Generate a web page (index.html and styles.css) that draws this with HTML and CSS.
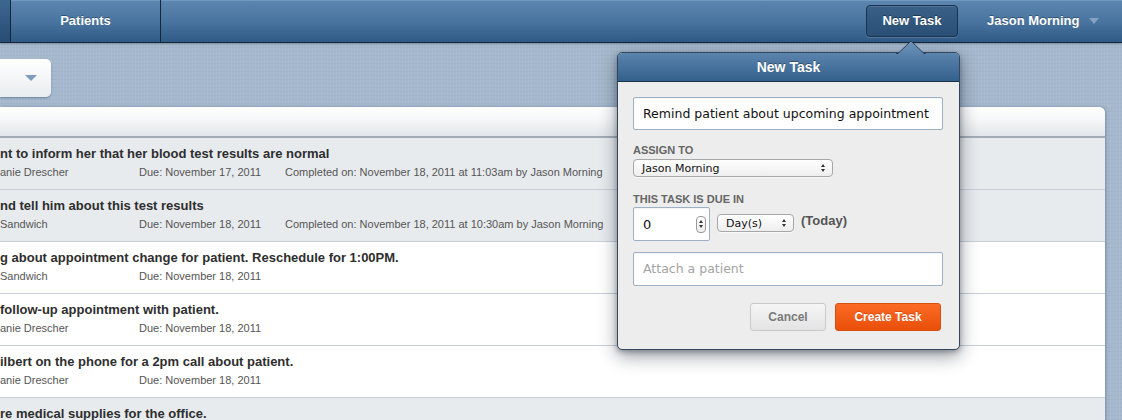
FILE: index.html
```html
<!DOCTYPE html>
<html>
<head>
<meta charset="utf-8">
<link rel="stylesheet" href="styles.css">
</head>
<body>
<header class="nav">
  <div class="nav-stub"></div>
  <div class="nav-tab">Patients</div>
  <div class="nav-spacer"></div>
  <button class="nav-newtask">New Task</button>
  <div class="nav-user">Jason Morning <span class="caret"></span></div>
</header>

<main class="main">
  <div class="filter-btn"><span class="caret caret-blue"></span></div>
  <section class="panel">
    <div class="panel-head"></div>
    <div class="row done">
      <div class="title">nt to inform her that her blood test results are normal</div>
      <div class="meta"><span class="who">anie Drescher</span><span class="due">Due: November 17, 2011</span><span class="comp">Completed on: November 18, 2011 at 11:03am by Jason Morning</span></div>
    </div>
    <div class="row done">
      <div class="title">nd tell him about this test results</div>
      <div class="meta"><span class="who">Sandwich</span><span class="due">Due: November 18, 2011</span><span class="comp">Completed on: November 18, 2011 at 10:30am by Jason Morning</span></div>
    </div>
    <div class="row">
      <div class="title">g about appointment change for patient. Reschedule for 1:00PM.</div>
      <div class="meta"><span class="who">Sandwich</span><span class="due">Due: November 18, 2011</span></div>
    </div>
    <div class="row">
      <div class="title">follow-up appointment with patient.</div>
      <div class="meta"><span class="who">anie Drescher</span><span class="due">Due: November 18, 2011</span></div>
    </div>
    <div class="row">
      <div class="title">ilbert on the phone for a 2pm call about patient.</div>
      <div class="meta"><span class="who">anie Drescher</span><span class="due">Due: November 18, 2011</span></div>
    </div>
    <div class="row done">
      <div class="title">re medical supplies for the office.</div>
    </div>
  </section>
</main>

<div class="popover">
  <svg class="pop-arrow" width="30" height="14" viewBox="0 0 30 14">
    <defs>
      <linearGradient id="ag" x1="0" y1="0" x2="0" y2="1">
        <stop offset="0" stop-color="#6b93b9"/>
        <stop offset="1" stop-color="#5b84ad"/>
      </linearGradient>
    </defs>
    <path d="M0 13.5 L2 13.5 L15 1 L28 13.5 L30 13.5" fill="url(#ag)" stroke="#2a3f55" stroke-width="1"/>
    <path d="M2.5 14 L15 2 L27.5 14 Z" fill="url(#ag)"/>
  </svg>
  <div class="pop-head">New Task</div>
  <div class="pop-body">
    <div class="field big">Remind patient about upcoming appointment</div>
    <div class="label">ASSIGN TO</div>
    <div class="select wide"><span>Jason Morning</span><span class="updown"><i class="up"></i><i class="dn"></i></span></div>
    <div class="label second">THIS TASK IS DUE IN</div>
    <div class="due-row">
      <div class="field num"><span>0</span><span class="spin"><i class="up"></i><i class="dn"></i></span></div>
      <div class="select small"><span>Day(s)</span><span class="updown"><i class="up"></i><i class="dn"></i></span></div>
      <div class="today">(Today)</div>
    </div>
    <div class="field big placeholder">Attach a patient</div>
    <div class="actions">
      <button class="btn cancel">Cancel</button>
      <button class="btn create">Create Task</button>
    </div>
  </div>
</div>
</body>
</html>
```
FILE: styles.css
```css
* { box-sizing: border-box; }
html, body { margin: 0; padding: 0; }
body {
  width: 1122px;
  height: 420px;
  overflow: hidden;
  position: relative;
  font-family: "Liberation Sans", Arial, sans-serif;
  background-color: #a5b8cd;
  background-image:
    repeating-linear-gradient(90deg, rgba(255,255,255,0.05) 0 1px, rgba(0,0,0,0) 1px 3px),
    repeating-linear-gradient(0deg, rgba(60,80,110,0.05) 0 1px, rgba(0,0,0,0) 1px 4px);
}

/* NAV */
.nav {
  display: flex;
  align-items: stretch;
  height: 43px;
  background: linear-gradient(#5c86af 0%, #4a75a0 50%, #2f5a86 100%);
  border-bottom: 1px solid #14283d;
  box-shadow: inset 0 1px 0 #7099c0, 0 1px 2px rgba(0,0,0,0.25);
}
.nav-stub {
  width: 11px;
  background: linear-gradient(#3e6790, #274c73);
  border-right: 1px solid #13263a;
}
.nav-tab {
  width: 150px;
  border-right: 1px solid #13263a;
  color: #fff;
  font-weight: bold;
  font-size: 13px;
  display: flex;
  align-items: center;
  justify-content: center;
  padding-bottom: 1px;
  text-shadow: 0 -1px 0 rgba(0,0,0,0.35);
}
.nav-spacer { flex: 1; }
.nav-newtask {
  align-self: center;
  margin-top: -1px;
  width: 92px;
  height: 32px;
  border: 1px solid #1b334d;
  border-radius: 4px;
  background: linear-gradient(#3a6088, #2b4f76);
  box-shadow: inset 0 1px 0 rgba(255,255,255,0.12), 0 1px 0 rgba(255,255,255,0.15);
  color: #fff;
  font-family: "Liberation Sans", Arial, sans-serif;
  font-weight: bold;
  font-size: 13px;
  padding: 0;
  text-shadow: 0 -1px 0 rgba(0,0,0,0.4);
}
.nav-user {
  display: flex;
  align-items: center;
  margin-left: 29px;
  width: 135px;
  color: #fff;
  font-weight: bold;
  font-size: 13px;
  padding-bottom: 1px;
  text-shadow: 0 -1px 0 rgba(0,0,0,0.35);
}
.caret {
  display: inline-block;
  width: 0; height: 0;
  border-left: 5px solid transparent;
  border-right: 5px solid transparent;
  border-top: 6px solid #86a2c0;
  margin-left: 10px;
  margin-top: 1px;
}

/* MAIN */
.main {
  padding-top: 16px;
  padding-right: 17px;
}
.filter-btn {
  width: 51px;
  height: 38px;
  background: linear-gradient(#ffffff, #e9ecef);
  border-radius: 0 5px 5px 0;
  box-shadow: 0 1px 2px rgba(40,60,90,0.45);
  display: flex;
  align-items: center;
  justify-content: flex-end;
  padding-right: 14px;
}
.caret-blue {
  border-top-color: #7e9cbd;
  border-left-width: 6px;
  border-right-width: 6px;
  margin: 0;
}
.panel {
  margin-top: 10px;
  background: #fff;
  border-radius: 0 6px 0 0;
  box-shadow: 1px 0 3px rgba(40,60,90,0.35);
  overflow: hidden;
}
.panel-head {
  height: 31px;
  background: linear-gradient(#ffffff 0%, #f7f8f9 40%, #e3e6ea 100%);
  border-bottom: 2px solid #a3acb6;
}
.row {
  height: 52px;
  border-bottom: 1px solid #c7d0d9;
  background: #fff;
  padding-top: 8px;
  color: #333;
}
.row.done { background: #e8ebee; }
.title {
  font-weight: bold;
  font-size: 13px;
  line-height: 16px;
  color: #2e2e2e;
  white-space: nowrap;
}
.meta {
  display: flex;
  font-size: 11px;
  line-height: 16px;
  margin-top: 2px;
  color: #555;
  white-space: nowrap;
}
.who { width: 139px; }
.due { width: 146px; }

/* POPOVER */
.popover {
  position: absolute;
  left: 617px;
  top: 52px;
  width: 343px;
  height: 298px;
  border: 1px solid #34475c;
  border-radius: 5px;
  background: #ededed;
  box-shadow: 0 6px 18px rgba(20,30,45,0.45), 0 2px 5px rgba(20,30,45,0.3);
}
.pop-arrow {
  position: absolute;
  left: 278px;
  top: -13px;
}
.pop-head {
  height: 29px;
  border-radius: 4px 4px 0 0;
  background: linear-gradient(#5b84ad, #33608c);
  border-bottom: 1px solid #1c3147;
  color: #fff;
  font-weight: bold;
  font-size: 14px;
  text-align: center;
  line-height: 28px;
  text-shadow: 0 -1px 0 rgba(0,0,0,0.35);
}
.pop-body {
  padding: 15px 16px 0 15px;
  font-family: "DejaVu Sans", "Liberation Sans", sans-serif;
}
.field {
  background: #fff;
  border: 1px solid #9db1c6;
  border-radius: 2px;
  color: #111;
  box-shadow: inset 0 1px 1px rgba(0,0,0,0.05);
}
.field.big {
  width: 310px;
  height: 33px;
  padding: 0 9px;
  font-size: 12.5px;
  line-height: 31px;
  white-space: nowrap;
}
.field.placeholder { color: #a4a4a4; margin-top: 11px; height: 34px; line-height: 32px; }
.label {
  font-family: "Liberation Sans", Arial, sans-serif;
  font-weight: bold;
  font-size: 11px;
  color: #666;
  margin-top: 14px;
  line-height: 13px;
}
.label.second { margin-top: 16px; }
.select {
  display: flex;
  align-items: center;
  justify-content: space-between;
  height: 18px;
  border: 1px solid #a7a7a7;
  border-radius: 4px;
  background: linear-gradient(#ffffff, #eeeeee);
  font-size: 11px;
  color: #111;
  padding: 0 7px 0 8px;
  box-shadow: 0 1px 0 rgba(255,255,255,0.6);
}
.select.wide { width: 200px; margin-top: 2px; }
.select.small { width: 77px; margin-left: 7px; margin-top: 7px; }
.updown, .spin {
  display: flex;
  flex-direction: column;
  align-items: center;
  gap: 2px;
}
.updown i, .spin i {
  display: block;
  width: 0; height: 0;
  border-left: 2.5px solid transparent;
  border-right: 2.5px solid transparent;
}
.updown i.up, .spin i.up { border-bottom: 3px solid #333; }
.updown i.dn, .spin i.dn { border-top: 3px solid #333; }
.due-row {
  display: flex;
  align-items: flex-start;
  margin-top: 1px;
}
.field.num {
  width: 77px;
  height: 34px;
  display: flex;
  align-items: center;
  justify-content: space-between;
  padding: 0 3px 0 9px;
  font-size: 13px;
}
.spin {
  width: 10px;
  height: 17px;
  border: 1px solid #9a9a9a;
  border-radius: 4px;
  justify-content: center;
  background: linear-gradient(#fff, #ececec);
}
.today {
  font-family: "Liberation Sans", Arial, sans-serif;
  font-weight: bold;
  font-size: 13px;
  color: #555;
  margin-left: 7px;
  margin-top: 6px;
  line-height: 16px;
}
.actions {
  display: flex;
  justify-content: flex-end;
  gap: 9px;
  margin-top: 17px;
  padding-right: 2px;
}
.btn {
  height: 28px;
  border-radius: 3px;
  font-family: "Liberation Sans", Arial, sans-serif;
  font-weight: bold;
  font-size: 12px;
  padding: 0;
}
.btn.cancel {
  width: 76px;
  border: 1px solid #c9c9c9;
  background: linear-gradient(#f6f6f6, #e3e3e3);
  color: #7a7a7a;
}
.btn.create {
  width: 106px;
  border: 1px solid #d5510f;
  background: linear-gradient(#fb6b25, #ea4f0a);
  color: #fff;
  text-shadow: 0 -1px 0 rgba(150,40,0,0.35);
}
```
